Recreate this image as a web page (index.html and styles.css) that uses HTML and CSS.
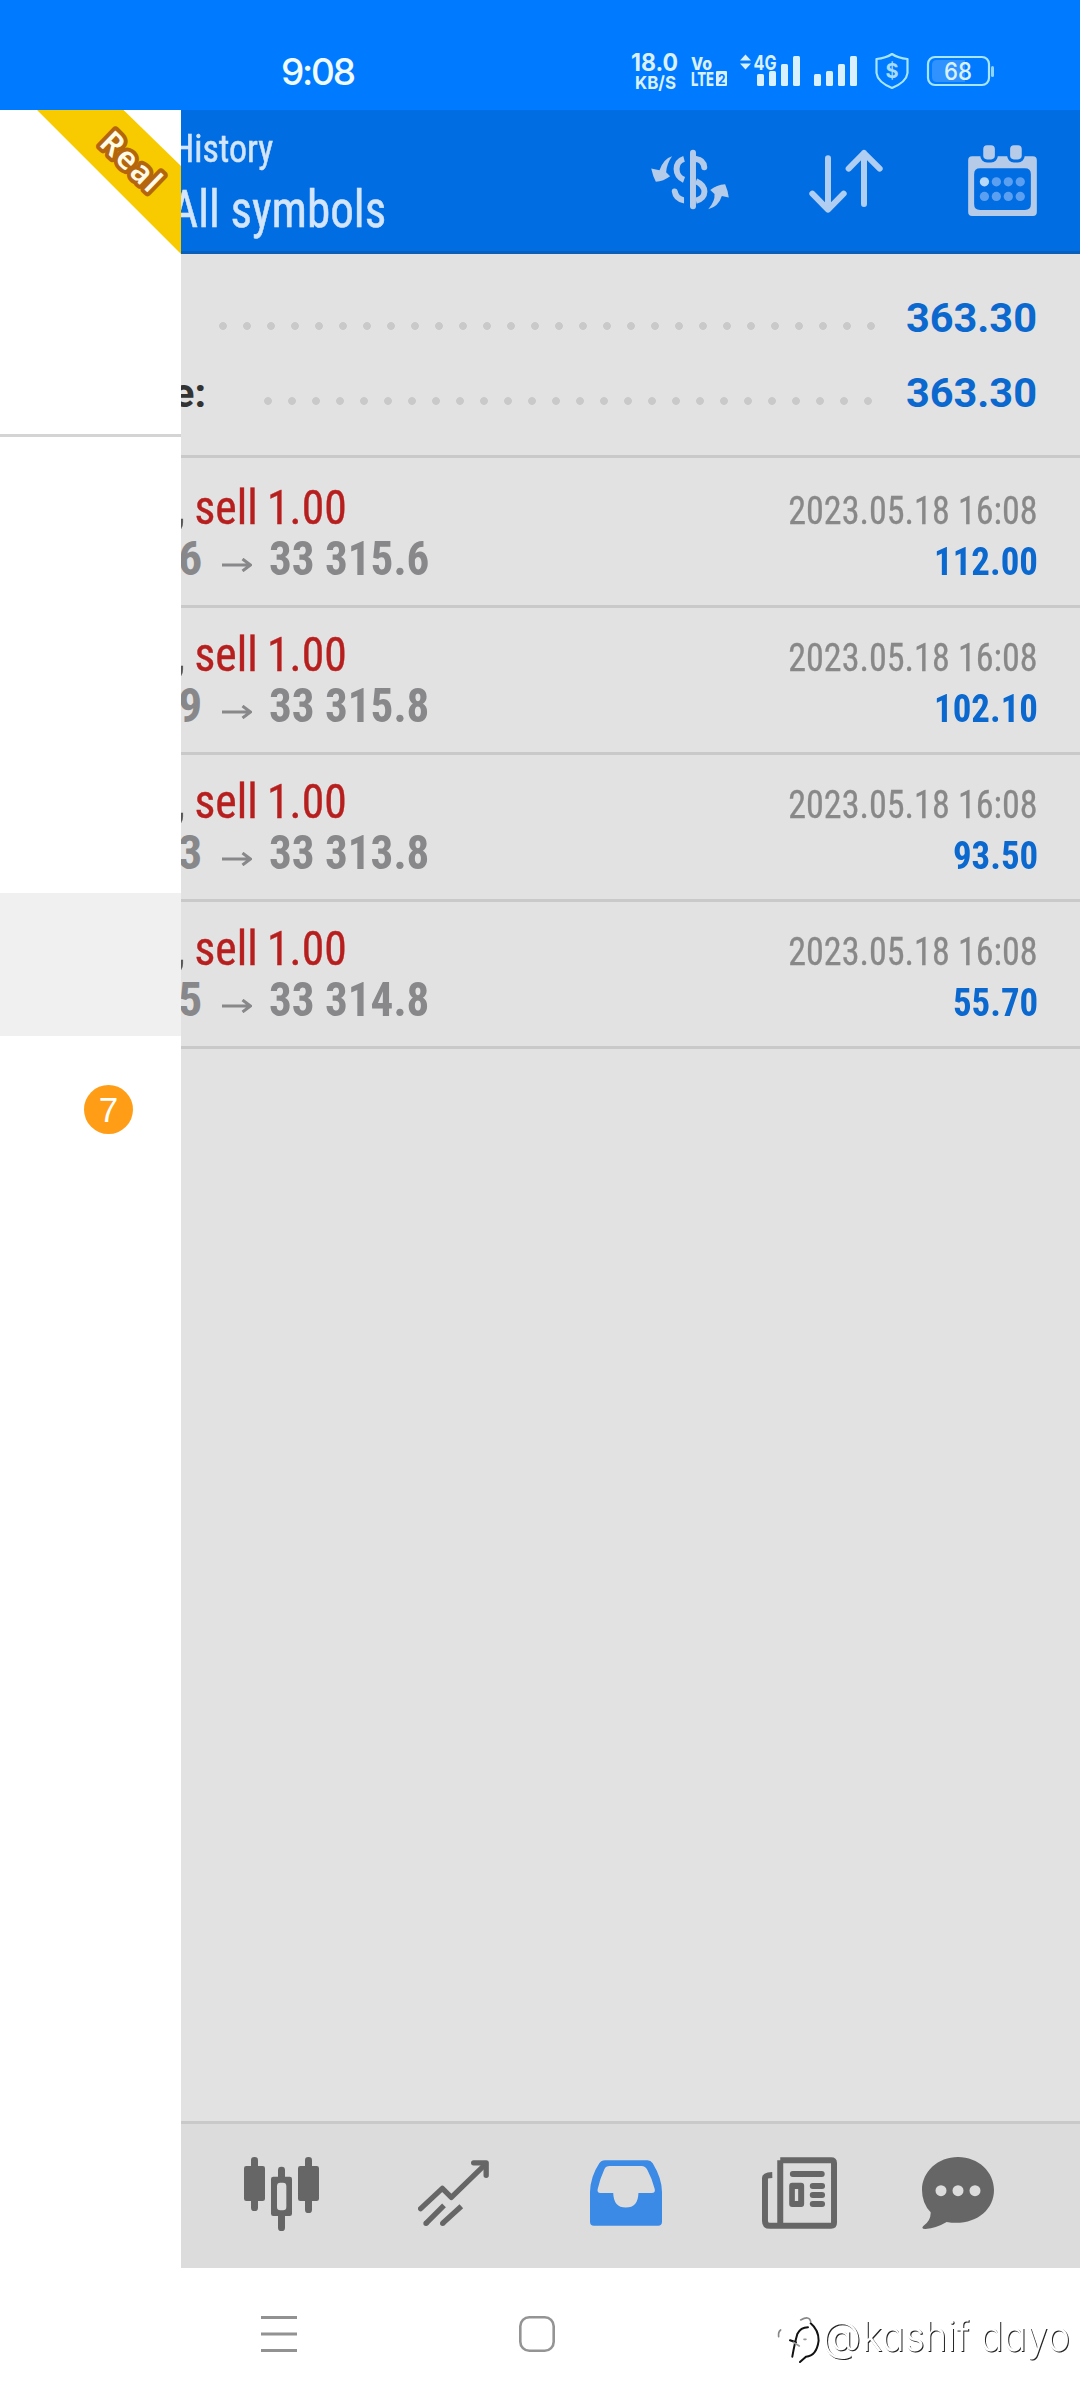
FILE: index.html
```html
<!DOCTYPE html>
<html lang="en">
<head>
<meta charset="utf-8">
<title>History</title>
<link rel="stylesheet" href="styles.css">
</head>
<body>
<div class="screen">
  <div class="status">
    <span class="clock">9:08</span>
    <svg class="status-icons" viewBox="628 48 370 44" width="370" height="44">
      <g fill="#d9f1ff" font-family="Inter, sans-serif">
        <text x="631" y="71" font-size="24" font-weight="700" textLength="47" lengthAdjust="spacingAndGlyphs">18.0</text>
        <text x="635" y="89" font-size="18" font-weight="700" textLength="41" lengthAdjust="spacingAndGlyphs">KB/S</text>
        <text x="691" y="69.5" font-size="18" font-weight="800" textLength="21" lengthAdjust="spacingAndGlyphs">Vo</text>
        <text x="691" y="85.5" font-size="18.5" font-weight="800" textLength="23" lengthAdjust="spacingAndGlyphs">LTE</text>
        <rect x="716" y="71" width="11" height="15" rx="1"/>
        <text x="718" y="83.500" font-size="13" font-weight="700" fill="#007aff" textLength="7.500" lengthAdjust="spacingAndGlyphs">2</text>
        <path d="M740 60.500l5.500-6 5.500 6zM740 63.500l5.500 6 5.500-6z"/>
        <text x="753.500" y="69.500" font-size="20" font-weight="700" textLength="23" lengthAdjust="spacingAndGlyphs">4G</text>
        <rect x="757" y="74" width="7" height="12" rx="1.500"/>
        <rect x="769" y="71" width="7" height="15" rx="1.500"/>
        <rect x="781" y="64" width="7" height="22" rx="1.500"/>
        <rect x="793" y="56" width="7" height="30" rx="1.500"/>
        <rect x="814" y="74" width="7" height="12" rx="1.500"/>
        <rect x="826" y="71" width="7" height="15" rx="1.500"/>
        <rect x="838" y="64" width="7" height="22" rx="1.500"/>
        <rect x="850" y="56" width="7" height="30" rx="1.500"/>
        <path d="M892 54q6 4 15.500 5v14q-1 9-15.500 15-14.500-6-15.500-15V59q9.500-1 15.500-5z" fill="none" stroke="#a8e6ff" stroke-width="2.200" stroke-linejoin="round"/>
        <text x="892" y="78" font-size="20" font-weight="700" text-anchor="middle" fill="#a8dcff">$</text>
        <path d="M937 60h28v22h-28q-5 0-5-5V65q0-5 5-5z" fill="#2f92ff"/>
        <rect x="928" y="57" width="61" height="28" rx="7" fill="none" stroke="#a8e6ff" stroke-width="2.200"/>
        <rect x="991" y="66" width="3" height="11" rx="1.500" fill="#8fd4ff"/>
        <text x="944" y="80" font-size="24.500" font-weight="500" textLength="28" lengthAdjust="spacingAndGlyphs">68</text>
      </g>
    </svg>
  </div>

  <div class="app">
    <aside class="drawer">
      <div class="account">
        <svg class="ribbon" viewBox="0 0 181 144" width="181" height="144">
          <path d="M37 0H123.500L181 56V144z" fill="#f7cb00"/>
          <text transform="translate(98 34.500) rotate(44)" textLength="71" class="ribbon-text">Real</text>
        </svg>
      </div>
      <div class="menu-current"></div>
      <div class="menu-row"><span class="badge">7</span></div>
    </aside>

    <main class="page">
      <header class="bar">
        <div class="titles">
          <div class="title">History</div>
          <div class="subtitle">All symbols</div>
        </div>
        <svg class="ic-dollar" viewBox="150 355 240 190" width="80" height="63">
          <g fill="none" stroke="#b4cbea" stroke-width="18" stroke-linecap="round">
            <path d="M279 369V531"/>
            <path d="M288 388q23 3 25 25"/>
            <path d="M252 388C222 396 222 440 252 451" stroke-linecap="butt"/>
            <path d="M224 486q3 22 28 27" />
            <path d="M288 455C322 470 322 506 288 514" stroke-linecap="butt"/>
          </g>
          <path d="M252 530v-38h9v38z" fill="#006de3"/>
          <g fill="#b4cbea">
            <path d="M216 380Q190 388 178 422L153 417Q158 440 167 457Q190 455 210 440L198 428Q200 402 216 380z"/>
            <path d="M325 540Q346 516 344 494L331 482Q350 466 376 464Q384 482 387 504L366 500Q356 532 325 540z"/>
          </g>
        </svg>
        <svg class="ic-sort" viewBox="627 358 222 192" width="74" height="64">
          <path d="M684 386V539M637 492L684 540L731 492M792 523V370M746 417L792 370L839 417" fill="none" stroke="#b0cef2" stroke-width="18" stroke-linecap="round" stroke-linejoin="round"/>
        </svg>
        <svg class="ic-cal" viewBox="1104 344 207 214" width="69" height="71">
          <path d="M1116 378H1299q12 0 12 12V546q0 12-12 12H1116q-12 0-12-12V390q0-12 12-12zM1140 414q-18 0-18 18v90q0 18 18 18h135q18 0 18-18v-90q0-18-18-18z" fill="#b6cbe8" fill-rule="evenodd"/>
          <g fill="#b6cbe8" stroke="#006de3" stroke-width="9">
            <rect x="1145" y="340" width="44" height="52" rx="16"/>
            <rect x="1226" y="340" width="44" height="52" rx="16"/>
          </g>
          <circle cx="1153" cy="455" r="14" fill="#b8d8fa"/>
          <g fill="#5b9ff0">
            <circle cx="1189" cy="455" r="14"/><circle cx="1225" cy="455" r="14"/><circle cx="1261" cy="455" r="14"/>
            <circle cx="1153" cy="499" r="14"/><circle cx="1189" cy="499" r="14"/><circle cx="1225" cy="499" r="14"/><circle cx="1261" cy="499" r="14"/>
          </g>
        </svg>
      </header>

      <section class="summary">
        <div class="sum-row"><span class="dots dots-a"></span><b>363.30</b></div>
        <div class="sum-row"><span class="sum-label">e:</span><span class="dots dots-b"></span><b>363.30</b></div>
      </section>

      <section class="deals">
        <div class="deal">
          <div class="line"><span class="op"><i>,</i> sell 1.00</span><span class="date">2023.05.18 16:08</span></div>
          <div class="line"><span class="price">6<svg class="arrow" viewBox="0 0 30 14" width="30" height="14"><path d="M0 7H28M20.500 1L28.500 7L20.500 13"/></svg><span class="close">33 315.6</span></span><span class="profit">112.00</span></div>
        </div>
        <div class="deal">
          <div class="line"><span class="op"><i>,</i> sell 1.00</span><span class="date">2023.05.18 16:08</span></div>
          <div class="line"><span class="price">9<svg class="arrow" viewBox="0 0 30 14" width="30" height="14"><path d="M0 7H28M20.500 1L28.500 7L20.500 13"/></svg><span class="close">33 315.8</span></span><span class="profit">102.10</span></div>
        </div>
        <div class="deal">
          <div class="line"><span class="op"><i>,</i> sell 1.00</span><span class="date">2023.05.18 16:08</span></div>
          <div class="line"><span class="price">3<svg class="arrow" viewBox="0 0 30 14" width="30" height="14"><path d="M0 7H28M20.500 1L28.500 7L20.500 13"/></svg><span class="close">33 313.8</span></span><span class="profit">93.50</span></div>
        </div>
        <div class="deal">
          <div class="line"><span class="op"><i>,</i> sell 1.00</span><span class="date">2023.05.18 16:08</span></div>
          <div class="line"><span class="price">5<svg class="arrow" viewBox="0 0 30 14" width="30" height="14"><path d="M0 7H28M20.500 1L28.500 7L20.500 13"/></svg><span class="close">33 314.8</span></span><span class="profit">55.70</span></div>
        </div>
      </section>

      <nav class="tabs">
        <svg class="tab-quotes" viewBox="192 171 225 222" width="75" height="74" fill="#666">
          <rect x="213" y="171" width="21" height="162" rx="10"/><rect x="192" y="198" width="63" height="105" rx="7"/>
          <rect x="375" y="171" width="21" height="168" rx="10"/><rect x="354" y="198" width="63" height="105" rx="7"/>
          <rect x="294" y="200" width="21" height="45" rx="10"/><rect x="294" y="335" width="21" height="58" rx="10"/>
          <path d="M280 230h49q7 0 7 7v104q0 7-7 7h-49q-7 0-7-7V237q0-7 7-7z"/>
          <rect x="291" y="248" width="28" height="83" rx="10" fill="#dcdcdc"/>
        </svg>
        <svg class="tab-trend" viewBox="714 180 213 198" width="71" height="66" fill="none" stroke="#666" stroke-width="16" stroke-linecap="round" stroke-linejoin="round">
          <path d="M722 326L787 265L814 292L912 197"/>
          <path d="M881 188.500H918.500V226"/>
          <path d="M738 370L792 316M788 370L844 319" stroke-linecap="butt"/>
          <path d="M738 370h.1M788 370h.1"/>
        </svg>
        <svg class="tab-inbox" viewBox="91 180 217 198" width="72" height="66">
          <path d="M136 180H264q10 0 16 9Q308 235 308 276V366q0 12-12 12H103q-12 0-12-12V276Q92 230 119 189 125 180 136 180zM150 198Q139 198 134 208Q120 238 114 268Q112 279 122 279H161q1 44 38 44t38-44H277q12 0 9-12Q278 236 264 210Q258 198 246 198z" fill="#3b8ae6" fill-rule="evenodd"/>
        </svg>
        <svg class="tab-news" viewBox="607 171 226 216" width="75" height="72">
          <path d="M662 180H815q9 0 9 9V369q0 9-9 9H631q-15 0-15-15V234q0-9 22-9.500M662 180V378" fill="none" stroke="#666" stroke-width="18" stroke-linejoin="round"/>
          <path d="M700 222H787M760 258H788M760 285H788M760 312H788" fill="none" stroke="#666" stroke-width="18" stroke-linecap="round"/>
          <path d="M698 248h27q9 0 9 9v55q0 9-9 9h-27q-9 0-9-9v-55q0-9 9-9zM706 267v36h10v-36z" fill="#666" fill-rule="evenodd"/>
        </svg>
        <svg class="tab-chat" viewBox="1086 171 216 216" width="72" height="72">
          <path d="M1194 171C1255 171 1302 216 1302 270C1302 334 1240 380 1160 366Q1130 384 1096 387Q1082 386 1090 378Q1113 362 1112 337Q1086 310 1086 270C1086 215 1134 171 1194 171z" fill="#666"/>
          <g fill="#dcdcdc"><circle cx="1143" cy="272" r="16.500"/><circle cx="1194" cy="272" r="16.500"/><circle cx="1245" cy="272" r="16.500"/></g>
        </svg>
      </nav>
    </main>
  </div>

  <footer class="sysnav">
    <svg class="nav-menu" viewBox="0 0 36 36" width="36" height="36"><path d="M0 1.500H36M0 18H36M0 34.500H36" stroke="#929292" stroke-width="3"/></svg>
    <svg class="nav-home" viewBox="0 0 36 36" width="36" height="36"><rect x="1.300" y="1.300" width="33.400" height="33.400" rx="9" fill="none" stroke="#949494" stroke-width="2.600"/></svg>
    <svg class="signature" viewBox="777 2313 297 53" width="297" height="53">
      <g fill="none" stroke-linecap="round" transform="translate(560 2100) scale(.3333)">
        <path d="M656 710Q654 696 662 690M722 660Q748 646 752 664" stroke="#888" stroke-width="5"/>
        <path d="M752 670Q776 690 776 722Q770 768 738 770L720 786M697 770Q704 730 712 702Q722 682 744 682M690 721L708 727" stroke="#111" stroke-width="6"/>
        <path d="M700 727L718 738M732 718h6" stroke="#999" stroke-width="5"/>
      </g>
      <g class="signature-text">
        <text x="822" y="2351" textLength="39" lengthAdjust="spacingAndGlyphs">@</text>
        <text x="862" y="2351" textLength="208" lengthAdjust="spacingAndGlyphs">kashif dayo</text>
      </g>
    </svg>
  </footer>
</div>
</body>
</html>
```
FILE: styles.css
```css
* { box-sizing: border-box; }
body { margin: 0; font-family: Roboto, sans-serif; background: #fff; }
svg { display: block; flex: none; }
.screen { width: 1080px; height: 2400px; display: flex; flex-direction: column; overflow: hidden; }

.status { height: 110px; background: #007aff; display: flex; padding: 48px 82px 0 281px; justify-content: space-between; }
.clock { color: #f0fbff; font: 500 37px/44px Inter, sans-serif; letter-spacing: -2.200px; padding-top: 2px; }

.app { height: 2158px; display: flex; }
.drawer { width: 181px; flex: none; background: #fff; }
.account { height: 327px; border-bottom: 3px solid #d4d4d4; }
.ribbon-text { font: 600 31px "Noto Sans", sans-serif; fill: #fffbe6; stroke: #b5650c; stroke-width: 8px; stroke-linejoin: round; paint-order: stroke; }
.menu-current { height: 143px; margin-top: 456px; background: #f0f0f0; }
.menu-row { height: 147px; display: flex; align-items: center; padding: 0 0 0 84px; }
.badge { width: 49px; height: 49px; border-radius: 50%; background: #ff9d17; color: #fff; font: 35px/49px "Liberation Sans", sans-serif; text-align: center; }

.page { flex: 1; min-width: 0; background: #e2e2e2; display: flex; flex-direction: column; overflow: hidden; }
.bar { height: 144px; flex: none; background: #006de3; border-bottom: 3px solid #0a5fb8; display: flex; align-items: flex-start; padding-right: 43px; }
.titles { width: 469px; flex: none; color: #d3e5fa; font-stretch: 75%; white-space: nowrap; overflow: hidden; -webkit-text-stroke: .5px; }
.title { font-size: 39px; line-height: 46px; margin: 16px 0 0 -9px; transform: scaleX(.92); transform-origin: left; }
.subtitle { font-size: 52px; line-height: 62px; margin: 7px 0 0 -10px; transform: scaleX(.905); transform-origin: left; }
.ic-dollar { margin-top: 38px; }
.ic-sort { margin: 39px 0 0 79px; }
.ic-cal { margin: 35px 0 0 auto; }

.summary { height: 204px; flex: none; border-bottom: 3px solid #c9c9c9; padding: 26px 43px 0 0; }
.sum-row { height: 75px; display: flex; align-items: center; font-size: 41.500px; }
.sum-row b { margin-left: auto; color: #0a68cf; }
.sum-label { color: #333; font-weight: 700; width: 91px; margin-left: -9px; }
.dots { height: 8px; margin-top: 16px; background: radial-gradient(circle at 4px 4px, #c9c9c9 3.500px, transparent 4.300px) 0 0 / 24px 8px; }
.dots-a { width: 656px; margin-left: 38px; }
.dots-b { width: 608px; margin-left: 1px; }

.deals { flex: 1; padding-top: 3px; }
.deal { height: 147px; border-bottom: 3px solid #c9c9c9; padding: 21px 42px 0 0; font-stretch: 75%; }
.line { height: 51px; display: flex; justify-content: space-between; align-items: baseline; white-space: nowrap; line-height: 51px; }
.op { font-size: 48px; color: #b71f1f; margin-left: -5px; word-spacing: -1px; transform: scaleX(.95); transform-origin: left; -webkit-text-stroke: .4px; }
.op i { font-style: normal; color: #555; }
.price { font-size: 48px; font-weight: 700; color: #88888a; margin-left: -3px; display: flex; align-items: baseline; }
.close { transform: scaleX(.94); transform-origin: left; }
.arrow { margin: 0 17px 0 20px; align-self: center; position: relative; top: 6px; fill: none; stroke: #88888a; stroke-width: 3px; }
.date { font-size: 39px; color: #888; transform: scaleX(.925); transform-origin: right; -webkit-text-stroke: .3px; }
.profit { font-size: 39px; font-weight: 700; color: #0a68cf; transform: scaleX(.945); transform-origin: right; }

.tabs { height: 147px; flex: none; background: #dcdcdc; border-top: 3px solid #c9c9c9; display: flex; align-items: flex-start; padding-left: 63px; }
.tab-quotes { margin-top: 33px; }
.tab-trend { margin: 36px 0 0 99px; }
.tab-inbox { margin: 36px 0 0 101px; }
.tab-news { margin: 33px 0 0 100px; }
.tab-chat { margin: 33px 0 0 85px; }

.sysnav { height: 132px; background: #fff; display: flex; }
.nav-menu { margin: 48px 0 0 261px; }
.nav-home { margin: 48px 0 0 222px; }
.signature { margin: 45px 0 0 222px; }
.signature-text { font: 300 41px Inter, sans-serif; font-feature-settings: "cv11"; fill: #fff; filter: drop-shadow(1px 1px 0 #222); }
```
